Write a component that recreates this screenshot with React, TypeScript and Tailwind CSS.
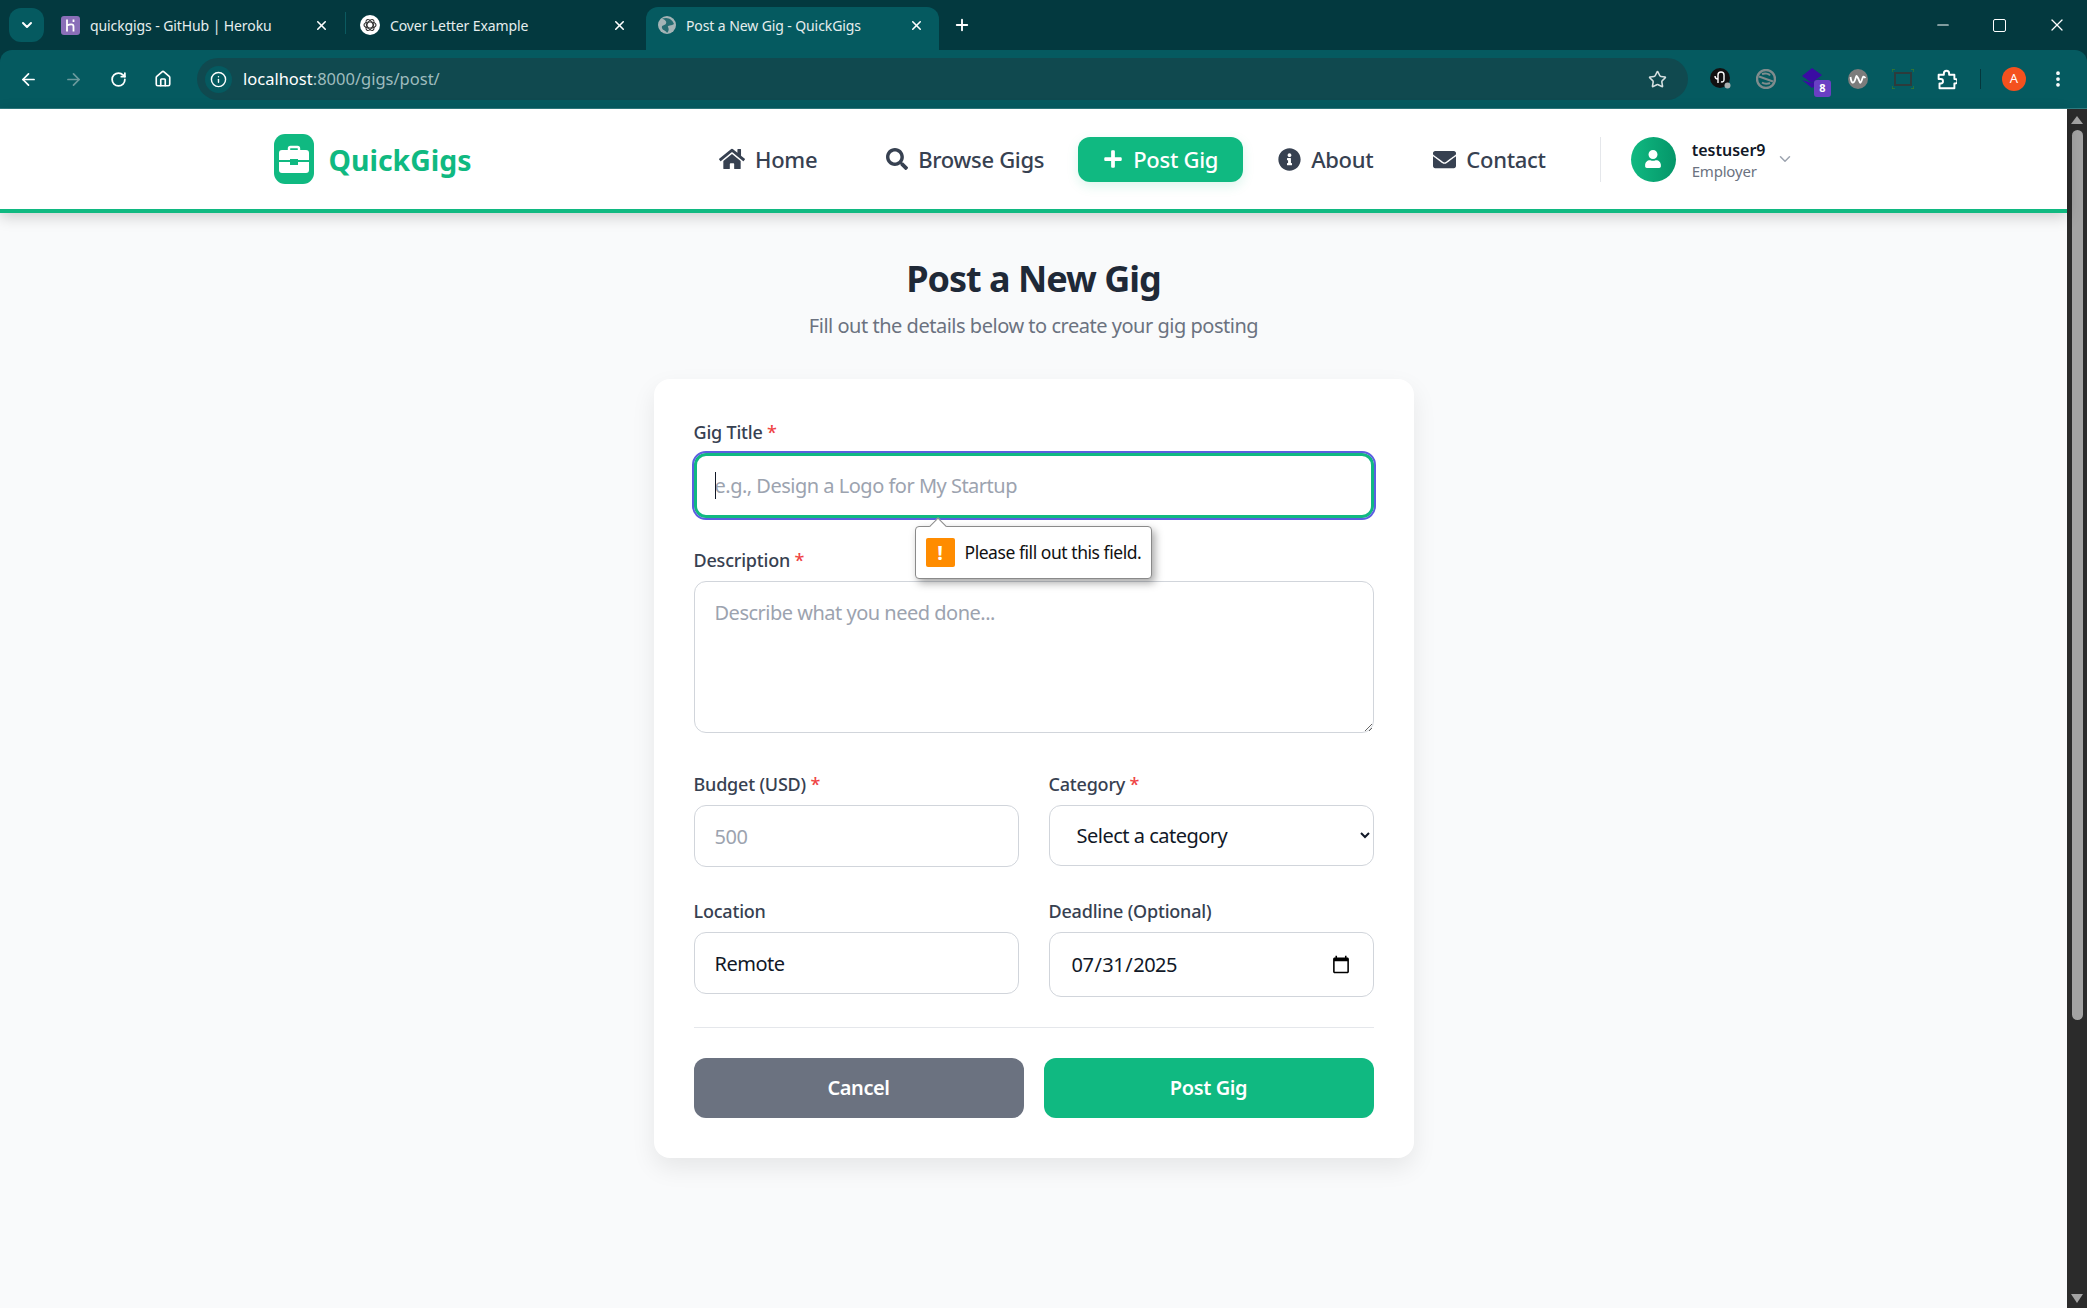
import { ArrowLeft, ArrowRight, Home, Info, MoreVertical, Plus, RotateCw, Star, X, Minus, ChevronDown } from "lucide-react"
import { FaEnvelope, FaHome, FaInfoCircle, FaPlus, FaSearch, FaUser } from "react-icons/fa"

function BrowserTab({ title, icon, className }: { title: string; icon: React.ReactNode; className: string }) {
  return (
    <div className={`flex h-[43px] shrink-0 items-center pb-[7px] ${className}`}>
      {icon}
      <span className="ml-[10px] flex-1 truncate text-[14px] tracking-[-0.1px] text-[#e6eeee]">{title}</span>
      <X className="h-[15px] w-[15px] shrink-0 text-white" strokeWidth={2.5} />
    </div>
  )
}

function BrowserChrome() {
  return (
    <div className="h-[109px] shrink-0 bg-[#03393f] pt-[7px]">
      <div className="flex h-[43px] items-start pl-[9px] pr-[16px]">
        <div className="mt-[1px] flex h-[34px] w-[35px] shrink-0 items-center justify-center rounded-xl bg-[#055a60]">
          <ChevronDown className="h-4 w-4 text-white" strokeWidth={3} />
        </div>
        <BrowserTab
          title="quickgigs - GitHub | Heroku"
          className="ml-[5px] w-[296px] pl-[12px] pr-[16px]"
          icon={
            <svg viewBox="0 0 19 19" className="h-[19px] w-[19px] shrink-0">
              <rect width="19" height="19" rx="3" fill="#8a6fb8" />
              <path d="M6 3.500v12M6 9.500c3-1.500 6.500-2 6.500 1v5M12.500 3.500v2.500" fill="none" stroke="#fff" strokeWidth="1.8" />
            </svg>
          }
        />
        <div className="mt-[5px] h-[22px] w-px shrink-0 bg-[#0b5a60]" />
        <BrowserTab
          title="Cover Letter Example"
          className="w-[300px] pl-[14px] pr-[19px]"
          icon={
            <svg viewBox="0 0 20 20" className="h-5 w-5 shrink-0">
              <circle cx="10" cy="10" r="10" fill="#fff" />
              <g fill="none" stroke="#333" strokeWidth="1.2">
                <ellipse cx="10" cy="10" rx="6" ry="3" />
                <ellipse cx="10" cy="10" rx="6" ry="3" transform="rotate(60 10 10)" />
                <ellipse cx="10" cy="10" rx="6" ry="3" transform="rotate(120 10 10)" />
              </g>
            </svg>
          }
        />
        <BrowserTab
          title="Post a New Gig - QuickGigs"
          className="w-[293px] rounded-t-xl bg-[#055a60] pl-[12px] pr-[15px]"
          icon={
            <svg viewBox="0 0 18 18" className="h-[18px] w-[18px] shrink-0">
              <circle cx="9" cy="9" r="9" fill="#a4b4b6" />
              <path d="M4 2.500c3 1 5 3 4 5S3 9 4 12s4 2 5 5c2-2 2-4 1-6s4-1 6-3c-1-3-4-6-8-6z" fill="#055a60" opacity="0.8" />
            </svg>
          }
        />
        <Plus className="ml-[14px] mt-[9px] h-[18px] w-[18px] shrink-0 text-white" strokeWidth={2.5} />
        <div className="flex-1" />
        <div className="flex items-center pt-[8px] pr-[4px] text-white">
          <Minus className="h-[18px] w-[18px]" strokeWidth={1.5} />
          <div className="ml-[41px] h-[13px] w-[13px] rounded-[2px] border border-white" />
          <X className="ml-[41px] h-5 w-5" strokeWidth={1.5} />
        </div>
      </div>
      <div className="flex h-[59px] items-center rounded-t-xl border-b border-[#2f7b80] bg-[#055a60] pl-[19px] pr-[19px]">
        <ArrowLeft className="h-[19px] w-[19px] shrink-0 text-white" strokeWidth={2.2} />
        <ArrowRight className="ml-[26px] h-[19px] w-[19px] shrink-0 text-[#6b9a9d]" strokeWidth={2.2} />
        <RotateCw className="ml-[27px] h-[17px] w-[17px] shrink-0 text-white" strokeWidth={2.5} />
        <Home className="ml-[27px] h-[18px] w-[18px] shrink-0 text-white" strokeWidth={2.2} />
        <div className="ml-[25px] flex h-[42px] flex-1 items-center rounded-full bg-[#10494f] pl-[8px] pr-[21px]">
          <div className="flex h-[27px] w-[27px] items-center justify-center rounded-full bg-[#055a60]">
            <Info className="h-[17px] w-[17px] text-white" strokeWidth={2} />
          </div>
          <span className="ml-[11px] text-[16.5px] text-white">
            localhost<span className="text-[#9fbcbe]">:8000/gigs/post/</span>
          </span>
          <div className="flex-1" />
          <Star className="h-[19px] w-[19px] text-[#d5dfe0]" strokeWidth={2} />
        </div>
        <div className="ml-[22px] flex w-[358px] shrink-0 items-center text-white">
          <svg viewBox="0 0 22 22" className="h-[22px] w-[22px] shrink-0">
            <circle cx="10" cy="10" r="10" fill="#111" />
            <path d="M8 15V7a3 3 0 0 1 6 0v5a2 2 0 0 1-3 1.700M8 11c-2 0-3-1-3-3" fill="none" stroke="#fff" strokeWidth="1.4" />
            <circle cx="17.5" cy="17.5" r="3" fill="#a9b0b0" />
          </svg>
          <svg viewBox="0 0 20 20" className="ml-[24px] h-5 w-5 shrink-0">
            <circle cx="10" cy="10" r="9" fill="none" stroke="#7f8c8d" strokeWidth="2.4" />
            <path d="M3 7.500l14 5M6 5c3-1 7-.5 8 1.500M6 13.500c2 1.500 6 1.500 8 .5" fill="none" stroke="#7f8c8d" strokeWidth="2" />
          </svg>
          <div className="relative ml-[25px] h-[22px] w-[24px] shrink-0">
            <svg viewBox="0 0 24 22" className="h-[22px] w-[24px]">
              <path d="M1 8l10-8 10 7-10 8z" fill="#3a0ca3" />
              <path d="M1 12l10 8 10-7-3-2-7 4z" fill="#3a0ca3" />
            </svg>
            <div className="absolute -bottom-[7px] -right-[6px] flex h-[17px] w-[17px] items-center justify-center rounded-[3px] bg-[#6a3fc4] text-[11px] font-bold text-white">
              8
            </div>
          </div>
          <svg viewBox="0 0 20 20" className="ml-[23px] h-5 w-5 shrink-0">
            <circle cx="10" cy="10" r="10" fill="#7c7c7c" />
            <path d="M2.500 8c1 7 3 7 4.500 3s1-6 3-2 2 7 3.500 3 1.500-6 4-3" fill="none" stroke="#fff" strokeWidth="1.8" />
          </svg>
          <svg viewBox="0 0 22 20" className="ml-[24px] h-5 w-[22px] shrink-0">
            <rect x="3" y="4" width="16" height="12" fill="none" stroke="#2d3b3c" strokeWidth="2" />
            <path d="M0 3V0h3M19 0h3v3M22 17v3h-3M3 20H0v-3" fill="none" stroke="#3b7a2a" strokeWidth="1.3" />
          </svg>
          <svg viewBox="0 0 24 24" className="ml-[22px] h-[21px] w-[21px] shrink-0">
            <path d="M3 6.500h6V5a3 3 0 0 1 6 0v1.500h6v5h1a2.500 2.500 0 0 1 0 5h-1V22H4v-5.500h1.500a2.500 2.500 0 0 0 0-5H3z" fill="none" stroke="#fff" strokeWidth="2.2" strokeLinejoin="round" />
          </svg>
          <div className="ml-[23px] h-[20px] w-px shrink-0 bg-[#04373c]" />
          <div className="ml-[21px] flex h-6 w-6 shrink-0 items-center justify-center rounded-full bg-[#f4511e] text-[13px] text-white">A</div>
          <MoreVertical className="ml-[22px] h-5 w-5 shrink-0" strokeWidth={2.5} />
        </div>
      </div>
    </div>
  )
}

function NavLink({ icon, label, className = "" }: { icon: React.ReactNode; label: string; className?: string }) {
  return (
    <a className={`flex h-[45px] items-center gap-[10px] rounded-xl px-[25px] text-[22px] font-medium tracking-[-0.3px] text-[#374151] ${className}`}>
      {icon}
      {label}
    </a>
  )
}

function Navbar() {
  return (
    <nav className="relative shrink-0 border-b-[4px] border-[#10b981] bg-white shadow-[0_4px_14px_rgba(0,0,0,0.18)]">
      <div className="mx-auto flex h-[100px] w-[1600px] items-center justify-between px-[40px]">
        <div className="flex items-center gap-[15px]">
          <div className="flex h-[50px] w-[40px] items-center justify-center rounded-[11px] bg-[#10b981]">
            <svg viewBox="0 0 30 28" className="h-[28px] w-[30px]">
              <path d="M10 6V3.500A1.500 1.500 0 0 1 11.500 2h7A1.500 1.500 0 0 1 20 3.500V6" fill="none" stroke="#fff" strokeWidth="2.4" />
              <path d="M3 5h24a3 3 0 0 1 3 3v7H19v-1h-8v1H0V8a3 3 0 0 1 3-3z" fill="#fff" />
              <path d="M0 17h11v3h8v-3h11v8a3 3 0 0 1-3 3H3a3 3 0 0 1-3-3z" fill="#fff" />
            </svg>
          </div>
          <span className="pt-[2px] text-[28.4px] font-bold text-[#10b981]">QuickGigs</span>
        </div>
        <div className="flex items-center">
          <NavLink icon={<FaHome className="h-[26px] w-[26px]" />} label="Home" />
          <NavLink className="ml-[19px]" icon={<FaSearch className="h-[22px] w-[22px]" />} label="Browse Gigs" />
          <NavLink className="ml-[9px] bg-[#10b981] !text-white shadow-[0_4px_12px_rgba(16,185,129,0.15)]" icon={<FaPlus className="h-5 w-5" />} label="Post Gig" />
          <NavLink className="ml-[10px]" icon={<FaInfoCircle className="h-[23px] w-[23px]" />} label="About" />
          <NavLink className="ml-[10px]" icon={<FaEnvelope className="h-[23px] w-[23px]" />} label="Contact" />
          <div className="ml-[29px] flex h-[45px] items-center border-l border-[#e5e7eb] pl-[30px]">
            <div className="flex h-[45px] w-[45px] items-center justify-center rounded-full bg-gradient-to-r from-[#10b981] to-[#059669]">
              <FaUser className="h-[18px] w-[18px] text-white" />
            </div>
            <div className="ml-[16px] flex flex-col pt-[2px] leading-none">
              <span className="text-[16px] font-semibold text-[#111827]">testuser9</span>
              <span className="mt-[6px] text-[15px] tracking-[-0.2px] text-[#6b7280]">Employer</span>
            </div>
            <ChevronDown className="ml-[10px] h-[18px] w-[18px] text-[#9ca3af]" />
          </div>
        </div>
      </div>
    </nav>
  )
}

function FieldLabel({ text, required }: { text: string; required?: boolean }) {
  return (
    <label className="mb-[7px] block h-[26px] text-[18px] leading-[24px] font-medium tracking-[-0.2px] text-[#374151]">
      {text}
      {required && <span className="text-[#ef4444]"> *</span>}
    </label>
  )
}

const fieldClass =
  "block w-full rounded-xl border border-[#d1d5db] bg-white px-[20px] text-[20px] tracking-[-0.5px] text-[#111827] outline-none placeholder:text-[#9ca3af]"

function PostGigForm() {
  return (
    <form className="w-[760px] rounded-2xl bg-white px-[40px] pt-[41px] pb-[40px] shadow-[0_10px_25px_rgba(0,0,0,0.08)]">
      <div className="relative">
        <FieldLabel text="Gig Title" required />
        <input
          className="block h-[65px] w-full rounded-xl border-[3px] border-[#10b981] px-[18px] text-[20px] tracking-[-0.5px] outline-2 outline-[#5b5fe0] placeholder:text-[#9ca3af]"
          placeholder="e.g., Design a Logo for My Startup"
        />
        <div className="absolute left-[21px] top-[52px] h-[27px] w-px bg-[#111827]" />
        {/* validation bubble */}
        <div className="absolute left-[221px] top-[106px] z-10 flex h-[53px] w-[237px] items-center rounded-[4px] border border-[#8a8a8a] bg-white pl-[10px] shadow-[3px_4px_8px_rgba(0,0,0,0.35)]">
          <div className="absolute -top-[7px] left-[16px] h-3 w-3 rotate-45 border-l border-t border-[#8a8a8a] bg-white" />
          <div className="flex h-[29px] w-[29px] shrink-0 items-center justify-center rounded-[2px] bg-[#ff8c00] text-[20px] font-bold text-white">!</div>
          <span className="ml-[10px] whitespace-nowrap text-[17.5px] tracking-[-0.45px] text-[#111]">Please fill out this field.</span>
        </div>
      </div>
      <div className="mt-[30px]">
        <FieldLabel text="Description" required />
        <textarea className={`${fieldClass} h-[152px] py-[16px]`} placeholder="Describe what you need done..." />
      </div>
      <div className="mt-[39px] grid grid-cols-2 gap-x-[30px]">
        <div>
          <FieldLabel text="Budget (USD)" required />
          <input className={`${fieldClass} h-[62px]`} placeholder="500" />
        </div>
        <div>
          <FieldLabel text="Category" required />
          <select className={`${fieldClass} h-[61px] !pl-[23px] !pr-[22px]`} defaultValue="">
            <option value="">Select a category</option>
          </select>
        </div>
      </div>
      <div className="mt-[32px] grid grid-cols-2 gap-x-[30px]">
        <div>
          <FieldLabel text="Location" />
          <input className={`${fieldClass} h-[62px]`} defaultValue="Remote" />
        </div>
        <div>
          <FieldLabel text="Deadline (Optional)" />
          <input type="date" className={`${fieldClass} h-[65px] !pl-[21px]`} defaultValue="2025-07-31" />
        </div>
      </div>
      <div className="mt-[30px] flex gap-[20px] border-t border-[#e5e7eb] pt-[30px]">
        <button type="button" className="h-[60px] flex-1 rounded-xl bg-[#6b7280] text-[20px] font-semibold tracking-[-0.4px] text-white">
          Cancel
        </button>
        <button type="button" className="h-[60px] flex-1 rounded-xl bg-[#10b981] text-[20px] font-semibold tracking-[-0.4px] text-white">
          Post Gig
        </button>
      </div>
    </form>
  )
}

function Scrollbar() {
  return (
    <div className="flex w-5 shrink-0 flex-col items-center bg-[#2b2b2b] pt-[7px]">
      <div className="h-0 w-0 border-x-[6px] border-b-[8px] border-x-transparent border-b-[#a3a3a3]" />
      <div className="mt-[6px] h-[890px] w-[11px] rounded-full bg-[#a3a3a3]" />
      <div className="flex-1" />
      <div className="mb-[5px] h-0 w-0 border-x-[6px] border-t-[9px] border-x-transparent border-t-[#a3a3a3]" />
    </div>
  )
}

export default function App() {
  return (
    <div className="flex h-[1308px] w-[2087px] flex-col overflow-hidden [font-family:'Noto_Sans',sans-serif]">
      <BrowserChrome />
      <div className="flex min-h-0 flex-1">
        <div className="flex min-w-0 flex-1 flex-col bg-[#f9fafb]">
          <Navbar />
          <main className="flex flex-col items-center pt-[40px]">
            <h1 className="text-[36px] leading-[52px] font-bold tracking-[-1px] text-[#1f2937]">Post a New Gig</h1>
            <p className="mt-[6px] text-[20px] leading-[30px] tracking-[-0.48px] text-[#6b7280]">Fill out the details below to create your gig posting</p>
            <div className="mt-[38px]">
              <PostGigForm />
            </div>
          </main>
        </div>
        <Scrollbar />
      </div>
    </div>
  )
}
